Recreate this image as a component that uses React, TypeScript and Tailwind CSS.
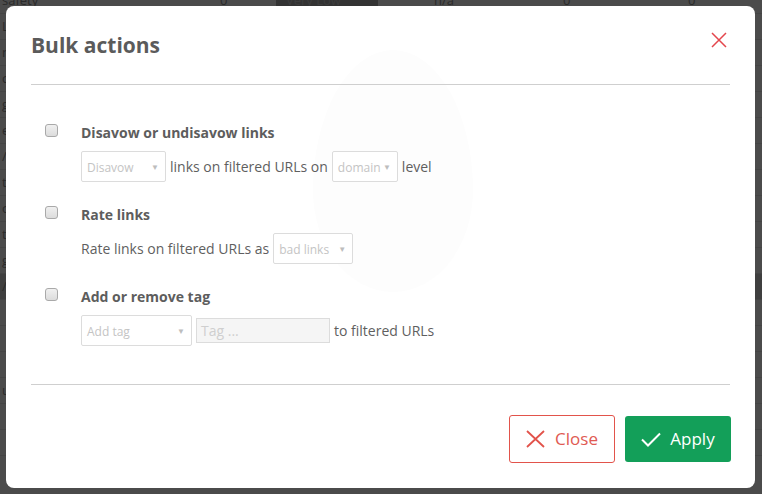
import React from 'react';

const font = { fontFamily: '"Open Sans", "Liberation Sans", sans-serif' };

const bgRows = [
  'safety', 'Link', 'n/a', 'cy', 'go', 'en', '/a', 'ta', 'on', 'ta', 'g', '/a', '', '', '', 'u', '', ''
];

const Checkbox: React.FC = () => (
  <div className="w-[13px] h-[13px] shrink-0 rounded-[3px] border border-[#a9a9a9] bg-gradient-to-b from-[#f0f0f0] to-[#dcdcdc]" />
);

interface SelectProps {
  label: string;
  width: string;
}

const FakeSelect: React.FC<SelectProps> = ({ label, width }) => (
  <div className={`${width} h-[31px] shrink-0 border border-[#dcdcdc] rounded-[2px] bg-white flex items-center justify-between pl-[5px] pr-[6px]`}>
    <span className="text-[12px] text-[#c4c4c4] pt-[2px]">{label}</span>
    <span className="text-[8px] text-[#bdbdbd]">▼</span>
  </div>
);

const Section: React.FC<{ title: string; children: React.ReactNode; className?: string }> = ({ title, children, className }) => (
  <div className={`flex ${className ?? ''}`}>
    <div className="pl-[14px] pt-[1px] w-[50px] shrink-0">
      <Checkbox />
    </div>
    <div className="flex flex-col gap-[8px]">
      <div className="text-[14px] leading-[20px] font-bold text-[#5d5d5d]">{title}</div>
      <div className="flex items-center gap-[4px] text-[14px] text-[#5f5f5f]">{children}</div>
    </div>
  </div>
);

export default function App() {
  return (
    <div className="relative w-[762px] h-[494px] overflow-hidden bg-[#4b4b4b]" style={font}>
      {/* page behind the overlay */}
      <div className="flex flex-col -mt-[12px]">
        {bgRows.map((t, i) => (
          <div
            key={i}
            className={`h-[26px] flex items-center border-b border-[#444] text-[13px] text-[#2a2a2a] ${i === 11 ? 'bg-[#3f3f3f]' : ''}`}
          >
            <span className="w-[220px] pl-[2px]">{t}</span>
            {i === 0 && (
              <>
                <span className="w-[56px]">0</span>
                <span className="w-[102px] h-[26px] bg-[#333] text-[#3d3d3d] px-[10px] flex items-center">Very Low</span>
                <span className="w-[150px] pl-[56px]">n/a</span>
                <span className="w-[130px] pl-[35px]">0</span>
                <span className="w-[80px] pl-[30px]">0</span>
              </>
            )}
          </div>
        ))}
      </div>

      {/* modal */}
      <div className="absolute left-[6px] top-[6px] w-[749px] h-[482px] bg-white rounded-[8px] overflow-hidden flex flex-col">
        <div className="absolute left-[307px] top-[44px] w-[160px] h-[242px] bg-[#fdfdfd] rounded-[50%_50%_50%_50%/58%_58%_42%_42%]" />

        <div className="relative h-[79px] shrink-0 mx-[25px] border-b border-[#cfcfcf] flex items-center justify-between">
          <h1 className="text-[21px] leading-[28px] font-bold text-[#5b5b5b]">Bulk actions</h1>
          <svg className="mr-[3px] -mt-[10px]" width="16" height="16" viewBox="0 0 16 16" fill="none" stroke="#e4474d" strokeWidth="1.5">
            <path d="M1 1 L15 15 M15 1 L1 15" />
          </svg>
        </div>

        <div className="relative flex-1 mx-[25px] border-b border-[#cfcfcf] flex flex-col pt-[38px]">
          <Section title="Disavow or undisavow links">
            <FakeSelect label="Disavow" width="w-[85px]" />
            <span>links on filtered URLs on</span>
            <FakeSelect label="domain" width="w-[66px]" />
            <span>level</span>
          </Section>
          <Section title="Rate links" className="mt-[23px]">
            <span>Rate links on filtered URLs as</span>
            <FakeSelect label="bad links" width="w-[80px]" />
          </Section>
          <Section title="Add or remove tag" className="mt-[23px]">
            <FakeSelect label="Add tag" width="w-[111px]" />
            <div className="w-[134px] h-[25px] border border-[#dcdcdc] bg-[#f5f5f5] flex items-center pl-[4px] text-[14px] text-[#cfcfcf]">Tag ...</div>
            <span>to filtered URLs</span>
          </Section>
        </div>

        <div className="relative h-[103px] shrink-0 flex items-start justify-end gap-[10px] pr-[24px] pt-[30px]">
          <button className="w-[106px] h-[48px] border border-[#e2534b] rounded-[3px] bg-white flex items-center justify-center gap-[10px] text-[17px] text-[#e05a52]">
            <svg width="19" height="18" viewBox="0 0 19 18" fill="none" stroke="#e2534b" strokeWidth="1.8">
              <path d="M1 1 L18 17 M18 1 L1 17" />
            </svg>
            <span>Close</span>
          </button>
          <button className="mt-[1px] w-[106px] h-[46px] rounded-[3px] bg-[#139f59] flex items-center justify-center gap-[9px] text-[17px] text-white">
            <svg width="20" height="15" viewBox="0 0 20 15" fill="none" stroke="white" strokeWidth="2">
              <path d="M1 7.5 L7 13.5 L19 1.5" />
            </svg>
            <span>Apply</span>
          </button>
        </div>
      </div>
    </div>
  );
}
